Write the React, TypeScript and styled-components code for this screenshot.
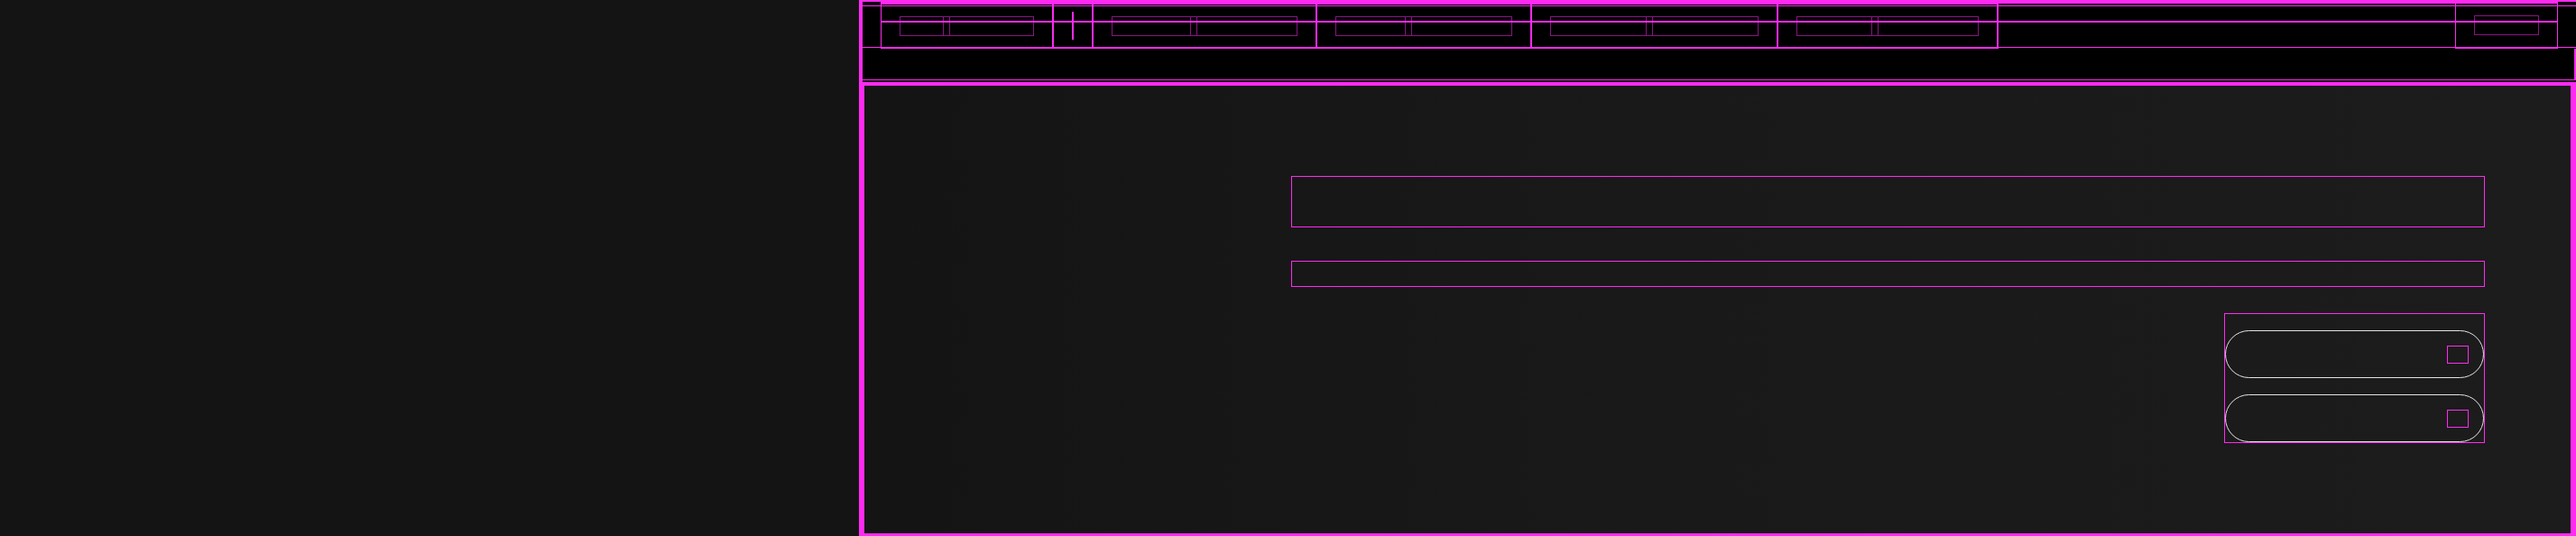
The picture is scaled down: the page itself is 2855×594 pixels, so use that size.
import * as React from 'react';
import styled, { createGlobalStyle } from 'styled-components';

const MAGENTA = '#ff2af2';
const MAGENTA_DIM = '#8a1483';

const GlobalStyle = createGlobalStyle`
  html, body {
    margin: 0;
    padding: 0;
    background: #141414;
    font-family: "Liberation Sans", Arial, sans-serif;
  }
  * { box-sizing: border-box; }
`;

const Page = styled.div`
  display: flex;
  width: 2855px;
  height: 594px;
  background: #141414;
`;

const SidePane = styled.div`
  width: 952px;
  flex-shrink: 0;
  background: #141414;
`;

const Workspace = styled.div`
  flex: 1;
  display: flex;
  flex-direction: column;
  min-width: 0;
`;

const Header = styled.div`
  height: 91px;
  display: flex;
  flex-direction: column;
  background: #000;
  border-left: 4px solid ${MAGENTA};
`;

const TabRow = styled.div`
  position: relative;
  height: 54px;
  display: flex;
`;

const GuideLine = styled.div<{ $top: number; $inset: number; $thick: number }>`
  position: absolute;
  top: ${(p) => p.$top}px;
  left: ${(p) => p.$inset}px;
  right: ${(p) => p.$inset}px;
  height: ${(p) => p.$thick}px;
  background: ${MAGENTA};
  pointer-events: none;
`;

const Cap = styled.div`
  width: 20px;
  height: 53px;
  flex-shrink: 0;
  border-top: 2px solid ${MAGENTA};
  border-bottom: 1px solid ${MAGENTA};
`;

const TabStrip = styled.div`
  display: flex;
  height: 54px;
  border-top: 5px solid ${MAGENTA};
  border-bottom: 2px solid ${MAGENTA};
  border-left: 1px solid ${MAGENTA};
`;

const Tab = styled.div<{ $width: number }>`
  width: ${(p) => p.$width}px;
  display: flex;
  align-items: center;
  justify-content: center;
  padding: 0 20px;
  border-right: 2px solid ${MAGENTA};
`;

const TabLabel = styled.div`
  flex: 1;
  height: 22px;
  display: flex;
  border: 1.5px solid ${MAGENTA_DIM};
`;

const LabelLead = styled.div<{ $width: number }>`
  width: ${(p) => p.$width}px;
  flex-shrink: 0;
`;

const LabelKnob = styled.div`
  width: 8px;
  flex-shrink: 0;
  border-left: 1.5px solid ${MAGENTA_DIM};
  border-right: 1.5px solid ${MAGENTA_DIM};
`;

const Separator = styled.div`
  width: 2px;
  height: 31px;
  background: ${MAGENTA};
`;

const Filler = styled.div`
  flex: 1;
  height: 53px;
  border-top: 4px solid ${MAGENTA};
  border-bottom: 1px solid ${MAGENTA};
`;

const EndTab = styled.div`
  width: 114px;
  height: 54px;
  flex-shrink: 0;
  display: flex;
  align-items: center;
  padding: 0 20px;
  border: 1px solid ${MAGENTA};
  border-top-width: 4px;
  border-bottom-width: 2px;
`;

const EndLabel = styled.div`
  flex: 1;
  height: 22px;
  border: 1.5px solid ${MAGENTA_DIM};
`;

const Toolbar = styled.div`
  flex: 1;
  margin: 0 0 2px -2px;
  border-left: 1px solid ${MAGENTA};
  border-right: 2px solid ${MAGENTA};
  border-bottom: 1px solid ${MAGENTA};
`;

const Main = styled.div`
  flex: 1;
  display: flex;
  flex-direction: column;
  padding: 100px 95px 0 473px;
  background: linear-gradient(90deg, #141414 0%, #191919 45%, #1c1c1c 100%);
  border-style: solid;
  border-color: ${MAGENTA};
  border-width: 4px 6px 3px 6px;
`;

const Field = styled.div<{ $height: number }>`
  height: ${(p) => p.$height}px;
  border: 1px solid ${MAGENTA};
`;

const FieldTall = styled(Field)`
  margin-bottom: 37px;
`;

const ActionGroup = styled.div`
  align-self: flex-end;
  width: 289px;
  margin-top: 29px;
  padding: 18px 0 0 0;
  display: flex;
  flex-direction: column;
  gap: 18px;
  border: 1px solid ${MAGENTA};
`;

const PillButton = styled.div`
  height: 53px;
  display: flex;
  align-items: center;
  justify-content: flex-end;
  padding-right: 16px;
  border: 1.5px solid #e4e4e4;
  border-radius: 27px;
`;

const PillIcon = styled.div`
  width: 24px;
  height: 20px;
  border: 1px solid ${MAGENTA};
`;

const tabs = [
  { width: 191, lead: 47 },
  { width: 44, separator: true },
  { width: 248, lead: 86 },
  { width: 238, lead: 76 },
  { width: 273, lead: 105 },
  { width: 244, lead: 82 },
];

export default function App() {
  return (
    <>
      <GlobalStyle />
      <Page>
        <SidePane />
        <Workspace>
          <Header>
            <TabRow>
              <Cap />
              <TabStrip>
                {tabs.map((t, i) => (
                  <Tab key={i} $width={t.width}>
                    {t.separator ? (
                      <Separator />
                    ) : (
                      <TabLabel>
                        <LabelLead $width={t.lead ?? 0} />
                        <LabelKnob />
                      </TabLabel>
                    )}
                  </Tab>
                ))}
              </TabStrip>
              <Filler />
              <EndTab>
                <EndLabel />
              </EndTab>
              <Cap />
              <GuideLine $top={6} $inset={0} $thick={1} />
              <GuideLine $top={23} $inset={20} $thick={2} />
            </TabRow>
            <Toolbar />
          </Header>
          <Main>
            <FieldTall $height={57} />
            <Field $height={29} />
            <ActionGroup>
              <PillButton>
                <PillIcon />
              </PillButton>
              <PillButton>
                <PillIcon />
              </PillButton>
            </ActionGroup>
          </Main>
        </Workspace>
      </Page>
    </>
  );
}
